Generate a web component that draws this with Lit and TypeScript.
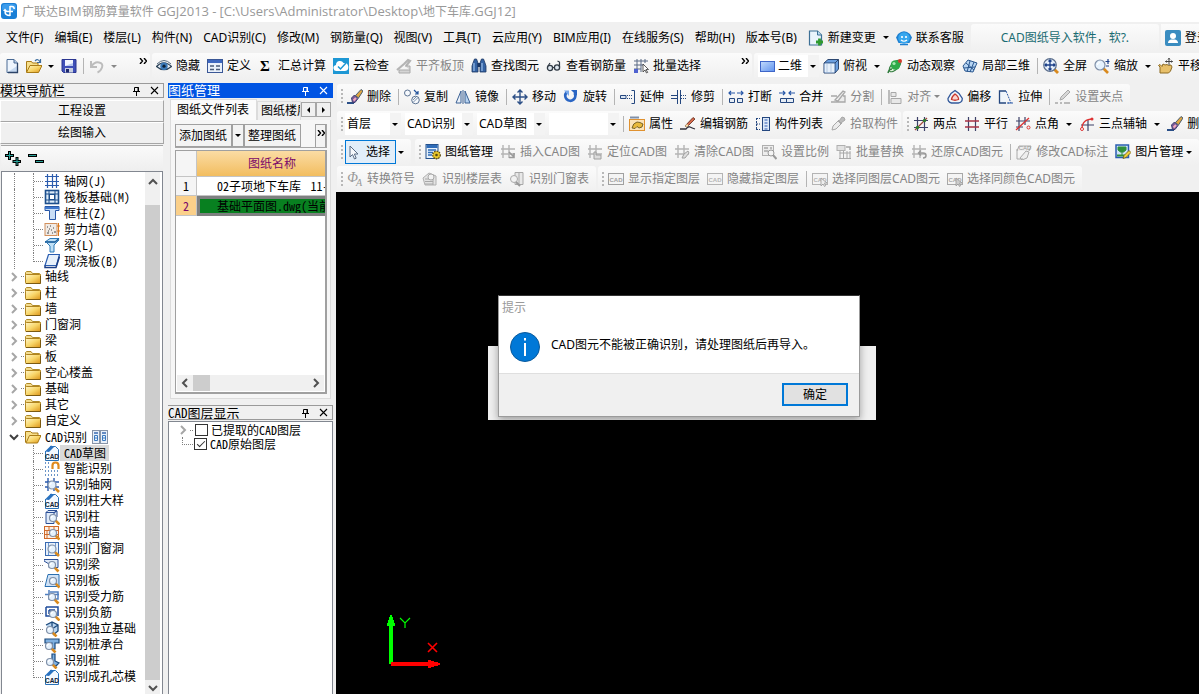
import { LitElement, html, svg, css, nothing } from "lit";
import { customElement, property, state } from "lit/decorators.js";

const G = "#a8a8a8";
const N = "#24477f";

const lens = (x: number, y: number, r = 4) => svg`
  <line x1="${x + r * 0.7}" y1="${y + r * 0.7}" x2="${x + r + 3}" y2="${y + r + 3}" stroke="#d98a1e" stroke-width="2.6"/>
  <circle cx="${x}" cy="${y}" r="${r}" fill="#e6f2fd" stroke="#8090a8" stroke-width="1.2"/>
  <path d="M${x - r * 0.5} ${y}a${r * 0.5} ${r * 0.5} 0 0 1 ${r * 0.5} ${-r * 0.5}" fill="none" stroke="#fff" stroke-width="1.2"/>`;

const hash = (c: string, o = 0) => svg`
  <path d="M${4 + o} 1v13M${10 + o} 1v13M1 5h14M1 10h14" fill="none" stroke="${c}" stroke-width="1.4"/>`;

const cadTag = (c: string) => svg`
  <rect x=".5" y="2.5" width="15" height="11" fill="#f4f4f4" stroke="${c}"/>
  <text x="8" y="10.500" font-size="6" font-weight="700" font-family="Liberation Sans, sans-serif" text-anchor="middle" fill="${c}">CAD</text>`;

const gold = svg`<linearGradient id="gold" x1="0" y1="0" x2="1" y2="1"><stop offset="0" stop-color="#fff6c8"/><stop offset=".5" stop-color="#f8d66a"/><stop offset="1" stop-color="#dc9418"/></linearGradient>`;

const ICONS: Record<string, unknown> = {
  app: svg`<rect width="16" height="16" rx="3" fill="#1a7fd6"/><rect x="1" y="1" width="14" height="7" rx="3" fill="#3b9cec"/>
    <path d="M9 3v10M3.500 8.500H12M9 3.500h2q2.200 0 2.200 2.500M4 8.500q0 4 5 4" fill="none" stroke="#fff" stroke-width="1.500"/><path d="M2 8l2-2.500L6 8z" fill="#fff"/>`,
  fresh: svg`<path d="M3 1.500h7l3.500 3.500v9.500H3z" fill="#eef5fd" stroke="#4a6a94"/><path d="M10 1.500V5h3.500" fill="#b6cbe6" stroke="#4a6a94"/><path d="M4 14h9V8z" fill="#c6d9f0"/><path d="M13.500 5v9.500H4" fill="none" stroke="#2c4468" stroke-width="1.300"/>`,
  open: svg`${gold}<path d="M.5 14V3.500h5l1 1.500H12v3" fill="#f7df8b" stroke="#a97b16"/><path d="M.5 14.500L4 7.500h12l-3.500 7z" fill="url(#gold)" stroke="#a97b16"/><path d="M9 3q3-3 5 1M14.500 1v3.500H11" fill="none" stroke="#3c6d9e" stroke-width="1.200"/>`,
  save: svg`<path d="M1 1.500h14v13H2.500L1 13z" fill="#3f50b8" stroke="#2b3690"/><rect x="4" y="2" width="8" height="6" fill="#f2f6ff"/><path d="M4 8h8V5z" fill="#b8c8ee"/><rect x="4" y="10" width="8" height="4.500" fill="#c8cfe0"/><rect x="5" y="11" width="3" height="3.500" fill="#1e2870"/>`,
  undo: svg`<path d="M2 3v6h6M2.500 8.500q3-5 7.500-4t3 5-4.500 5" fill="none" stroke="#bdbdbd" stroke-width="2"/>`,
  eye: svg`<path d="M.5 8.500Q7.500 1 15.500 8.500 8 15 .5 8.500z" fill="#e8eef4" stroke="#2b4258" stroke-width="1.200"/><circle cx="8" cy="8.200" r="3.700" fill="#3a79b8"/><circle cx="8" cy="8.200" r="1.600" fill="#0d2036"/><path d="M1 6Q8-1 15 6" fill="none" stroke="#54687c"/>`,
  define: svg`<rect x=".5" y="1.500" width="15" height="13" fill="#e9f0fb" stroke="#3a5796"/><rect x="1" y="2" width="14" height="3" fill="#3d67c0"/><path d="M3 8h4M3 11.500h4M9 8h4M9 11.500h4" stroke="#4a5b7a" stroke-width="1.500"/>`,
  sigma: svg`<text x="7" y="13" font-size="15" font-weight="700" font-family="Liberation Serif, serif" text-anchor="middle" fill="#000">Σ</text>`,
  cloud: svg`<rect width="16" height="16" fill="#1d97d4"/><path d="M4 13a3 3 0 0 1-1-6 4 4 0 0 1 7.500-2A4 4 0 0 1 12 13z" fill="#fff"/><path d="M5 8.500l2.500 2.500L13 5" fill="none" stroke="#1d97d4" stroke-width="1.500"/>`,
  level: svg`<path d="M1 12l7-6M8 6l4-4 2 1-4 5" fill="none" stroke="#b4b4b4" stroke-width="2.200"/><path d="M3 12h11v3H3zM9 8h5v4" fill="#d4d4d4" stroke="#aaa"/>`,
  binoc: svg`<path d="M2 5l1.500-4h2L7 5v9H1V8zM14 5l-1.500-4h-2L9 5v9h6V8z" fill="#3563a4" stroke="#1d3763" stroke-width=".8"/><rect x="6.500" y="5" width="3" height="4" fill="#1d3763"/><path d="M3 5v8M11 5v8" stroke="#9cc0ec" stroke-width="1.200"/>`,
  glasses: svg`<circle cx="4" cy="10" r="2.600" fill="#dfe8f0" stroke="#303a44" stroke-width="1.300"/><circle cx="11" cy="9.500" r="2.600" fill="#dfe8f0" stroke="#303a44" stroke-width="1.300"/><path d="M6.500 9.500h2M13.500 9V4l-2-1M2 8l2-3" fill="none" stroke="#303a44" stroke-width="1.200"/>`,
  batch: svg`<path d="M1 3h14M1 7h9M1 11h7M4 1v10M8 1v13M12 1v4" stroke="#5b6b85" fill="none"/><rect x="1" y="11" width="4" height="4" fill="#4f62d0"/><path d="M10 6v8l2-2 1.500 3 1.200-.6L13 11.500h2.500z" fill="#fff" stroke="#333" stroke-width=".8"/>`,
  plane: svg`<linearGradient id="sheet" x1="0" y1="0" x2="1" y2="1"><stop offset="0" stop-color="#c4dcfc"/><stop offset="1" stop-color="#5f92ee"/></linearGradient><rect x=".5" y="3.500" width="14" height="10" fill="url(#sheet)" stroke="#3f66c8"/>`,
  cube: svg`<path d="M1 5l4-3.500h10.500V11L12 15H1z" fill="#6b9fe0" stroke="#2c4770"/><path d="M1 5h11v10M12 5l3.500-3.500" fill="none" stroke="#2c4770"/><rect x="1.500" y="5.500" width="10" height="9" fill="#e7f0fa"/><path d="M4 6v8M8 6v8" stroke="#b5c9e2"/>`,
  orbit: svg`<ellipse cx="8" cy="8" rx="7.500" ry="3.500" transform="rotate(-45 8 8)" fill="#dff3da" stroke="#2f7a3c"/><circle cx="8.500" cy="7" r="4.800" fill="#2faa48"/><circle cx="7" cy="5.500" r="1.600" fill="#a6eab0"/><circle cx="13" cy="3" r="2" fill="#d43a2c"/><path d="M1 15q1-4 4-4" stroke="#2f7a3c" fill="none" stroke-width="1.500"/>`,
  local3d: svg`<path d="M1 8l5-6 9 3-4 9-8-1z" fill="#b8d6f4" stroke="#2a578f"/><path d="M4 5l8 7M8 3L5 14M12 4L8 14M2 10l11-1" fill="none" stroke="#2a578f"/>`,
  full: svg`<line x1="11" y1="11" x2="15" y2="15" stroke="#d98a1e" stroke-width="2.800"/><circle cx="7" cy="7" r="6.300" fill="#e4eefa" stroke="#5c6f8c" stroke-width="1.200"/><path d="M7 2v10M2 7h10M5.500 3.500L7 2l1.500 1.500M5.500 10.500L7 12l1.500-1.500M3.500 5.500L2 7l1.500 1.500M10.500 5.500L12 7l-1.500 1.500" fill="none" stroke="#1b3f88" stroke-width="1.300"/>`,
  zoom: svg`${lens(6, 7, 5)}<path d="M14 1v5M11.500 3.500h4M12 8h3" stroke="#1b3f88" stroke-width="1.200"/>`,
  pan: svg`<path d="M2 15V9L.5 7.500 2 6.500l2 2 1-2.500 2 1 2-.5 1.500 1L13 7l1 2-1.500 4-2 2z" fill="#e8c06a" stroke="#8d6a22"/><path d="M11 0v7M7.500 3.500h7M10 1.500L11 .3l1 1.200M8.500 2.500l-1 1 1 1M13.500 2.500l1 1-1 1" fill="none" stroke="#444"/>`,
  brush: svg`<path d="M0 14h7" stroke="#2a4f88" stroke-width="2"/><path d="M5.500 13.500L4.500 9l3-3 3.500 3.500-3 4z" fill="#7a5a96" stroke="#3d3f70"/><path d="M6.500 11.500l2.500-2.500" stroke="#f2a8bc" stroke-width="2.200"/><path d="M8.500 6.500L14 .5l2 1.500-4.500 7z" fill="#e0a640" stroke="#39506a" stroke-width=".9"/>`,
  copy: svg`<circle cx="3.500" cy="4" r="3" fill="#f6f9fd" stroke="#5c7392"/><circle cx="11.500" cy="11" r="3.800" fill="#f6f9fd" stroke="#5c7392"/><path d="M9 13.500l5-5M9 11l3-3" stroke="#5c7392" stroke-width=".8"/><path d="M10 1l4 4M14 2v3h-3" fill="none" stroke="#24549c" stroke-width="1.200"/>`,
  mirror: svg`<path d="M6 2v12H1z" fill="#eaf1f9" stroke="#3a6094"/><path d="M10 2v12h5z" fill="#b6d2ef" stroke="#3a6094"/><path d="M8 1v14" stroke="#3a6094"/>`,
  move: svg`<path d="M8 1v14M1 8h14M5.500 3.500L8 1l2.500 2.500M5.500 12.500L8 15l2.500-2.500M3.500 5.500L1 8l2.500 2.500M12.500 5.500L15 8l-2.500 2.500" fill="none" stroke="#2c4f86" stroke-width="1.400"/>`,
  rotate: svg`<path d="M3.500 3.500a5 5 0 1 0 8 .5" fill="none" stroke="#2b66c4" stroke-width="2.800"/><path d="M8 1h6v6z" fill="#2b66c4"/><path d="M1 1.500h5V7z" fill="#7aa9ea"/>`,
  extend: svg`<path d="M.5 6.500h5.500v3H.5z" fill="#dbe6f3" stroke="${N}"/><path d="M7 6.500h5M7 9.500h5" stroke="${N}" stroke-dasharray="1 1"/><path d="M11.500 1.500h3v13h-3" fill="none" stroke="${N}"/>`,
  trim: svg`<path d="M0 6.500h6M0 9.500h6" stroke="${N}"/><path d="M6.500 1v14M9.500 1v14" stroke="${N}"/><path d="M10 6.500h6M10 9.500h6" stroke="${N}" stroke-dasharray="1 1"/>`,
  brk: svg`<path d="M1 4h6M9 4h6M3 2L1 4l2 2M13 2l2 2-2 2" fill="none" stroke="#2858a8" stroke-width="1.200"/><path d="M1.500 9.500h5v4h-5zM9.500 9.500h5v4h-5z" fill="#e6edf5" stroke="${N}"/>`,
  join: svg`<path d="M0 4h6M10 4h6M4 2l2 2-2 2M12 2l-2 2 2 2" fill="none" stroke="#2858a8" stroke-width="1.200"/><path d="M1.500 9.500h6v4h-6zM7.500 9.500h7v4h-7z" fill="#e6edf5" stroke="${N}"/>`,
  split: svg`<path d="M1 7h6M1 13h14V7h-2M5 11l8-9 2 1-7 9z" fill="#ececec" stroke="${G}" stroke-width="1.300"/>`,
  align: svg`<path d="M2 1v14" stroke="${G}" stroke-width="1.500"/><path d="M4 3.500h5v4H4zM4 9.500h10v5H4z" fill="#e8e8e8" stroke="${G}"/>`,
  offset: svg`<path d="M8 1.500l4 3 3.300 5q0 4-4 4.500H4.500Q.7 13 1 9.500l3-5z" fill="#f3f6fa" stroke="#33599a" stroke-width="1.300"/><path d="M8 5q4 3 3.500 5.500-3.500 1.500-7 0Q4.500 8 8 5z" fill="#fbd6d0" stroke="#c9382c" stroke-width="1.300"/>`,
  stretch: svg`<path d="M8 2H1.500v12H8" fill="#eff5fb" stroke="${N}" stroke-width="1.300"/><path d="M8 2l5 12H8M10 14h5" fill="none" stroke="#2858a8" stroke-dasharray="2 1"/>`,
  grip: svg`<path d="M0 14h3M5 14h2M9 14h6" stroke="${G}" stroke-width="1.500"/><path d="M5 11l1-3 7-7 2 2-7 7z" fill="#d7d7d7" stroke="${G}"/>`,
  prop: svg`<path d="M1 1.500h9" stroke="#8090a8" stroke-width="2"/><rect x=".5" y="3.500" width="15" height="11" fill="#fbe3b8" stroke="#e0912f"/><path d="M3 12q1-5 5-6 3 0 6 2l-1 3-3 1-2-1.500-2 2z" fill="#e8b93a" stroke="#5b4a16" stroke-width=".8"/>`,
  edit: svg`<path d="M0 13h6q2-3 4-2t5 2" fill="none" stroke="#30303a" stroke-width="1.300"/><path d="M5 10l8-8.500 2 1.500-8 8z" fill="#d8694a" stroke="#5b2a1a" stroke-width=".8"/><path d="M5 10l2-2 1.500 1.500L7 11z" fill="#f4e4b0"/>`,
  list: svg`<path d="M1.500 2v12M1 2.500h4M1 8h4M1 13.500h4" fill="none" stroke="${N}" stroke-dasharray="2 1"/><rect x="7.500" y="1.500" width="7" height="13" fill="#dce8f7" stroke="${N}"/><path d="M9.500 4h3M9.500 7h3M9.500 10h3M9.500 13h3" stroke="#2c58b0"/>`,
  picker: svg`<path d="M2 14l1-4 5-5 3 3-5 5z" fill="#ececec" stroke="${G}"/><path d="M8 4l4 4M9 5l3-4q3 0 3 3l-4 3z" fill="#bcbcbc" stroke="${G}"/>`,
  two: svg`<path d="M4.500 1v14M11.500 1v14M1 4.500h14M1 11.500h14" stroke="#3d4168" stroke-width="1.200"/><path d="M2 14L14 2" stroke="#a04a3c" stroke-width="1.200"/><circle cx="4.500" cy="11.500" r="1.700" fill="#2f7d2f"/><circle cx="11.500" cy="4.500" r="1.700" fill="#2f7d2f"/>`,
  para: svg`<path d="M4.500 1v14M11.500 1v14" stroke="#3d4168" stroke-width="1.200"/><path d="M1 5h14M1 11h14" stroke="#a83244" stroke-width="1.300"/>`,
  angle: svg`<path d="M4 1v14M10 1v8M1 5h14M1 11h7" stroke="#3d4168" stroke-width="1.200"/><path d="M1 14L14 2" stroke="#d33" stroke-width="1.300"/><circle cx="13.500" cy="11.500" r="1.500" fill="none" stroke="#d33"/>`,
  three: svg`<path d="M9 4v11M2 9h13" stroke="#3d4168" stroke-width="1.200"/><path d="M3 13Q3 3 14 3" fill="none" stroke="#d33" stroke-width="1.300"/><circle cx="3" cy="13" r="1.500" fill="#fff" stroke="#d33"/><circle cx="13" cy="3" r="1.500" fill="#d33"/>`,
  cursor: svg`<path d="M4 2v11l2.500-2.500L8.500 15l1.700-.8L8.400 10H12z" fill="#f7f9fc" stroke="#5a6c84"/>`,
  mgr: svg`<rect x="1" y=".5" width="12" height="14" fill="#e6f0fb" stroke="#23508c"/><rect x="1.500" y="1" width="11" height="3" fill="#2f6cb8"/><path d="M3 6h8M3 8.500h5M3 11h4" stroke="#2f6cb8" stroke-width="1.500"/><circle cx="11.500" cy="11" r="3.800" fill="#e8c628" stroke="#5a4a10" stroke-width="1.300" stroke-dasharray="1.500 1"/><circle cx="11.500" cy="11" r="1.300" fill="#5a4a10"/>`,
  insert: svg`${hash("#b4b4b4", -1)}<path d="M9 8l5 5M14 9v4.500H9" fill="none" stroke="#9a9a9a" stroke-width="1.600"/>`,
  locate: svg`${hash("#b4b4b4", -1)}<path d="M7 15V8h2v3h5v4z" fill="#ddd" stroke="#a0a0a0"/>`,
  clear: svg`${hash("#b4b4b4", 0)}<path d="M8 14l2-4 4-3 1 2-4 5z" fill="#ddd" stroke="#a0a0a0"/>`,
  scale: svg`<rect x="1.500" y="1.500" width="11" height="10" fill="#ededed" stroke="#b0b0b0"/><path d="M3 4h4M3 7h4M9 4h2" stroke="#a8a8a8" stroke-width="1.500"/><circle cx="10" cy="9" r="3" fill="#f4f4f4" stroke="#999"/><path d="M12 11l3.500 4" stroke="#999" stroke-width="2"/>`,
  replace: svg`<rect x="1" y="1.500" width="8" height="5" fill="#e2e2e2" stroke="#b0b0b0"/><path d="M10 3h4v3" fill="none" stroke="#a8a8a8" stroke-width="1.500"/><path d="M3.500 9h11M4 7v8M7.500 7v8M11 7v8M14 7v8M3 14.500h12" stroke="#a8a8a8"/>`,
  restore: svg`${hash("#b4b4b4", -1)}<path d="M8 9h4q3 0 3 2.500T12 14M10 6.500L7.500 9l2.500 2.500" fill="none" stroke="#9a9a9a" stroke-width="1.500"/>`,
  modify: svg`<path d="M1 7l2-5h12l-2 5M1 5v10M1 15h6M4 14l6-7 3 1-2 6-5 2z" fill="#eee" stroke="#aaa"/><text x="9" y="6" font-size="6" font-family="Liberation Sans, sans-serif" text-anchor="middle" fill="#999">CAD</text>`,
  pics: svg`<rect x="1" y="1" width="12.500" height="12.500" fill="#cfe3f8" stroke="#2a5db0" stroke-width="1.500"/><path d="M3 3h8v3L8.500 8h-3L3 6zM7 7v5" fill="#2f8f3a" stroke="#2f8f3a"/><path d="M2 11.500h10" stroke="#2f8f3a" stroke-width="2"/><path d="M8 14.500l1-3 5-5 2 2-5 5z" fill="#f2d03c" stroke="#6a5a10" stroke-width=".8"/>`,
  convert: svg`<text x="5.500" y="11" font-size="14" font-style="italic" font-family="Liberation Serif, serif" text-anchor="middle" fill="#999">Φ</text><text x="12" y="15" font-size="10" font-style="italic" font-family="Liberation Serif, serif" text-anchor="middle" fill="#999">A</text>`,
  floors: svg`<path d="M1 7l6-5 7 3v9H3z" fill="#e3e3e3" stroke="#b0b0b0"/><path d="M3 8h8M3 10.500h8M3 13h8M11 5v9" stroke="#a8a8a8"/><circle cx="9" cy="6" r="3" fill="#f2f2f2" stroke="#aaa"/>`,
  doors: svg`<path d="M6 1.500h8v12H6zM10 2v12" fill="#e8e8e8" stroke="#a8a8a8"/><circle cx="5" cy="8" r="3.500" fill="#f2f2f2" stroke="#aaa"/><path d="M7 11l4 4" stroke="#999" stroke-width="2"/>`,
  cadShow: cadTag("#a0a0a0"),
  cadHide: cadTag("#b4b4b4"),
  cadPick: svg`${cadTag("#b4b4b4")}<path d="M9 7v8l2-2 1.500 2.500 1-.6L12.500 12H15z" fill="#eee" stroke="#999" stroke-width=".8"/>`,
  cadColor: svg`${cadTag("#a8a8a8")}<path d="M9 7v8l2-2 1.500 2.500 1-.6L12.500 12H15z" fill="#ccc" stroke="#999" stroke-width=".8"/>`,
  change: svg`<path d="M1.500 1h8l4 4v10h-12z" fill="#eaf4fc" stroke="#3d7096" stroke-width="1.200"/><path d="M9.500 1v4h4" fill="#bcdcf2" stroke="#3d7096"/><path d="M11.500 8.500v7M8 12h7" stroke="#2f9a2f" stroke-width="2.800"/>`,
  service: svg`<path d="M2 4Q8-1.500 14 4l2 3.500L13.500 13h-11L0 7.500z" fill="#1d7fd0"/><circle cx="8" cy="8" r="5.800" fill="#36a6ee"/><circle cx="6" cy="7" r="1.100" fill="#fff"/><circle cx="10" cy="7" r="1.100" fill="#fff"/><path d="M5 10q3 2.500 6 0" fill="none" stroke="#fff" stroke-width="1.200"/><path d="M4 14.500h8" stroke="#1d7fd0" stroke-width="1.500"/>`,
  user: svg`<rect width="16" height="16" rx="2" fill="#3a8cc0"/><circle cx="8" cy="6" r="3" fill="#fff"/><path d="M3 13q0-3 3-3.500h4q3 .5 3 3.500z" fill="#fff"/>`,
  folder: svg`${gold}<path d="M.5 12V3.500l1-1h4.500l1.500 2h7l1 1V12" fill="#f3dc90" stroke="#b08a28"/><rect x=".5" y="5.500" width="15" height="9" rx=".8" fill="url(#gold)" stroke="#b08420"/><path d="M1 14.500h14.500V7" fill="none" stroke="#7c5a10"/>`,
  folderOpen: svg`${gold}<path d="M.5 13.500v-11h5L7 4h6v3" fill="#f7df8b" stroke="#a97b16"/><path d="M1 14L4.500 6.500H16L12.500 14z" fill="url(#gold)" stroke="#a97b16"/>`,
  book: svg`<rect x=".5" y="1.500" width="7" height="13" fill="#e8f0fa" stroke="#8794a8"/><rect x="8.500" y="1.500" width="7" height="13" fill="#e8f0fa" stroke="#8794a8"/><path d="M2 4h4M10 4h4" stroke="#3a6ab0" stroke-width="1.500"/><path d="M2.500 6.500h3v5h-3zM10.500 6.500h3v5h-3zM2.500 9h3M10.500 9h3" fill="none" stroke="#3a7ac0"/>`,
  axis: svg`<path d="M3.500 1v14M8.500 1v14M12.500 1v14M1 3.500h14M1 8.500h14M1 12.500h14" stroke="#2c5cae" stroke-width="1.200" fill="none"/>`,
  raft: svg`<rect x="1.500" y="1.500" width="13" height="13" fill="#dcebf8" stroke="#1d4f8c" stroke-width="1.600"/><path d="M5 2v12M11 2v12M2 5h12M2 11h12" stroke="#1d4f8c"/><rect x="5.500" y="5.500" width="5" height="5" fill="#fff" stroke="#1d4f8c"/>`,
  column: svg`<path d="M1 1.500h14v4h-3.500v9h-6v-9H1z" fill="#c9def6" stroke="#2757a6"/><path d="M1 2h14v2H1z" fill="#3f78cd"/>`,
  wall: svg`<rect x="1" y="2.500" width="12" height="12" fill="#f0ebe6" stroke="#d2905c"/><path d="M3 6h1M6 5h1M9 7h1M4 10h1M7 9h1M3 12h2M8 12h1M10 11h2M5 8h1" stroke="#444"/><path d="M14.500 2v13M13 5h3M13 10h3" stroke="#d9791e"/>`,
  beam: svg`<path d="M1 5l5-3.500h9L11 5zM3 6l3 3v6h4V8l5-5" fill="#bfe0f6" stroke="#2d7bb8"/><path d="M1 5h10l4-3.500" fill="none" stroke="#1d5f9c" stroke-width="1.300"/>`,
  slab: svg`<path d="M4.500 1.500h11l-3 11H1z" fill="#e8f1fb" stroke="#2a5db0" stroke-width="1.200"/><path d="M1 12.500v2h11l3.500-11" fill="none" stroke="#1c3f86" stroke-width="1.500"/>`,
  cad: svg`<path d="M6 1.500h5.500l3 3V15.500H1.500V6" fill="#f4f9ff" stroke="#2a72b8"/><path d="M1 6.500l6-6 3 1.500-5 5z" fill="#2a72c0"/><text x="8" y="13.500" font-size="6.500" font-weight="700" font-family="Liberation Sans, sans-serif" text-anchor="middle" fill="#123">CAD</text>`,
  smart: svg`<path d="M1 2h6M1 6h6M1 10h14M1 14h14" stroke="#3c74b8" stroke-width="1.300" stroke-dasharray="1 2"/><path d="M8.500 8V4.500a3 3 0 0 1 6 0V8" fill="none" stroke="#e08a1e" stroke-width="2.200"/>`,
  rAxis: svg`${hash("#2c5cae")}${lens(8, 8)}`,
  rCol: svg`<path d="M2 3.500h8v11H2zM2 3.500l2-2h9l-3 2M10 4l3-2v6" fill="#dfeaf8" stroke="#2b4f96"/>${lens(9, 9, 3.5)}`,
  rWall: svg`<rect x=".5" y="1.500" width="14" height="12" fill="#fdf0e4" stroke="#cf6a2a"/><path d="M1 5.500h13M1 9.500h13M5 2v3M10 2v3M3 6v3M3 10v4" stroke="#cf6a2a"/>${lens(9, 8, 3.5)}`,
  rDoor: svg`<rect x="1.500" y="1.500" width="13" height="13" fill="#e7f0fb" stroke="#3a6ab0"/><path d="M4.500 2v12M11.500 2v12" stroke="#6f9ad2"/>${lens(8, 8)}`,
  rBeam: svg`<path d="M0 2.500h14v8H5V7L0 4z" fill="#dfeaf8" stroke="#2b4f96"/>${lens(8, 8, 3.5)}`,
  rSlab: svg`<path d="M4 1.500h11v12H1z" fill="#cfe2f6" stroke="#2a6fb0"/>${lens(9, 8, 3.5)}`,
  rBar: svg`<path d="M1 5.500h14M5 1v9h9V3H6" fill="none" stroke="#4f7fc0" stroke-width="1.500"/>${lens(8, 8, 3.5)}`,
  rNeg: svg`<path d="M2 2h12v9M2 2v9h6M5 5v4M5 5h6" fill="none" stroke="#1f4c9c" stroke-width="1.500"/>${lens(9, 9, 3.5)}`,
  rFound: svg`<path d="M2 4l6-3 6 3v6l-5 4M8 1v6M14 4L8 8" fill="#b8d4ee" stroke="#1c4a7c" stroke-width="1.300"/>${lens(6, 9, 3.5)}`,
  rCap: svg`<path d="M1 2h14v4h-4v6H8V6H1z" fill="#7fb0e0" stroke="#1c4a7c" stroke-width="1.200"/>${lens(5, 9, 3.5)}`,
  rPile: svg`<path d="M8 1h3v7l4 2-3 3-6-2 2-3z" fill="#7fb0e0" stroke="#1c4a7c" stroke-width="1.200"/>${lens(6, 9, 3.5)}`,
};

const icon = (name: string) =>
  html`<svg class="ic" viewBox="0 0 16 16" width="16" height="16" aria-hidden="true">${ICONS[name]}</svg>`;
const caret = (dim = false) =>
  html`<svg class="caret" viewBox="0 0 6 3" width="6" height="3" aria-hidden="true"><path d="M0 0h6L3 3z" fill="${dim ? "#888" : "#000"}"/></svg>`;
const more = html`<svg class="more" viewBox="0 0 8 6" width="8" height="6" aria-hidden="true"><path d="M1 0l2.500 3L1 6M5 0l2.500 3L5 6" fill="none" stroke="#000" stroke-width="1.400"/></svg>`;
const chevron = (d: string, color = "#505050") =>
  html`<svg viewBox="0 0 10 10" width="10" height="10" aria-hidden="true"><path d="${d}" fill="none" stroke="${color}" stroke-width="2"/></svg>`;
const UP = "M1 7l4-4 4 4", DOWN = "M1 3l4 4 4-4", LEFT = "M7 1L3 5l4 4", RIGHT = "M3 1l4 4-4 4";

/* Wraps the Latin runs of a label, so that they can take a face of their own. */
const mono = (text: string) =>
  text.split(/([\x21-\x7e]+)/).map((p) => (/^[\x21-\x7e]/.test(p) ? html`<span class="lat">${p}</span>` : p));

const iconStyles = css`
  .ic { flex: none; display: block; }
  .caret { flex: none; display: block; }
  .more { flex: none; display: block; }
  button {
    font: inherit; color: inherit; border: 0; padding: 0; margin: 0;
    background: none; white-space: nowrap; text-align: left;
  }
  .lat { font-family: "Noto Sans Mono CJK SC", "Liberation Mono", monospace; }
`;

type Width = "s" | "m" | "l";
type Item =
  | { k: "b"; i?: string; t?: string; off?: boolean; drop?: boolean; tight?: boolean }
  | { k: "sep" } | { k: "more" } | { k: "grip"; near?: boolean } | { k: "sel" }
  | { k: "combo"; t: string; label: string; w: Width; i?: string };

const b = (i: string, t = "", o: { off?: boolean; drop?: boolean; tight?: boolean } = {}): Item => ({ k: "b", i, t, ...o });
const off = { off: true };
const sep: Item = { k: "sep" }, grip: Item = { k: "grip" }, near: Item = { k: "grip", near: true }, moreItem: Item = { k: "more" };

@customElement("tool-strip")
class ToolStrip extends LitElement {
  @property({ attribute: false }) items: Item[] = [];

  static styles = [iconStyles, css`
    :host {
      display: flex; align-items: center; flex: none; height: 26px; padding: 0 0 0 4px;
      border-radius: 3px; background: linear-gradient(#fbfbfb, #f0f0f0);
    }
    .btn { display: flex; align-items: center; gap: 4px; margin-right: 7px; height: 22px; flex: none; }
    .btn:disabled { color: #858585; }
    .bare { margin-right: 6px; }
    .tight { margin-right: 3px; }
    .caret { margin-right: 7px; }
    .sep { width: 1px; height: 16px; background: #b4b4b4; margin-right: 5px; flex: none; }
    .grip {
      width: 2px; height: 15px; margin-right: 4px; flex: none;
      background: repeating-linear-gradient(#b8b8b8 0 2px, transparent 2px 4px);
    }
    .near { margin-right: 2px; }
    .more { align-self: flex-start; margin: 5px 3px 0 auto; }
    .sel {
      display: flex; align-items: center; height: 24px; padding: 0 5px 0 0; gap: 4px;
      border: 1px solid #0078d7; background: #e2eef9; margin-right: 2px; box-sizing: border-box;
    }
    .combo { display: grid; align-items: center; margin-right: 4px; height: 22px; background: #fff; flex: none; }
    .combo > * { grid-area: 1 / 1; }
    .combo .caret { justify-self: end; margin-right: 3px; pointer-events: none; }
    .combo .ic { margin-left: 2px; pointer-events: none; }
    select {
      appearance: none; font: inherit; color: #000; border: 0; border-radius: 0; height: 22px; padding: 0 12px 0 2px;
      outline: 0; background: linear-gradient(to left, #f3f3f3 11px, #fff 11px);
    }
    .s { width: 56px; }
    .m { width: 68px; }
    .l { width: 70px; }
    .pic { padding-left: 20px; width: 61px; }
  `];

  private one(it: Item) {
    switch (it.k) {
      case "sep": return html`<span class="sep"></span>`;
      case "grip": return html`<span class="grip ${it.near ? "near" : ""}"></span>`;
      case "more": return more;
      case "sel": return html`<button class="sel">${icon("cursor")}<span>选择</span></button>${caret()}`;
      case "combo": return html`<label class="combo">
        <select class=${it.i ? "pic" : it.w} aria-label=${it.label}><option>${it.t}</option></select>
        ${it.i ? icon(it.i) : nothing}${caret()}</label>`;
      case "b": return html`<button class="btn ${it.t ? "" : "bare"} ${it.tight ? "tight" : ""}" ?disabled=${!!it.off}>
        ${it.i ? icon(it.i) : nothing}${it.t ? html`<span>${it.t}</span>` : nothing}</button>${it.drop ? caret(!!it.off) : nothing}`;
    }
  }
  render() { return this.items.map((i) => this.one(i)); }
}

const ROW_FILE: Item[] = [b("fresh"), b("open", "", { drop: true }), b("save"), sep, b("undo", "", { off: true, drop: true }), moreItem];
const ROW_MAIN: Item[] = [
  b("eye", "隐藏"), b("define", "定义"), b("sigma", "汇总计算"), b("cloud", "云检查"), b("level", "平齐板顶", off),
  b("binoc", "查找图元"), b("glasses", "查看钢筋量"), b("batch", "批量选择"), moreItem,
];
const ROW_VIEW: Item[] = [
  { k: "combo", t: "二维", label: "视图维度", w: "m", i: "plane" }, b("cube", "俯视", { drop: true }), b("orbit", "动态观察"),
  b("local3d", "局部三维"), sep, b("full", "全屏"), b("zoom", "缩放", { drop: true }), b("pan", "平移"),
];
const ROW_EDIT: Item[] = [
  grip, b("brush", "删除"), sep, b("copy", "复制"), b("mirror", "镜像"), sep, b("move", "移动"), b("rotate", "旋转"), sep,
  b("extend", "延伸"), b("trim", "修剪"), sep, b("brk", "打断"), b("join", "合并"), b("split", "分割", off), sep,
  b("align", "对齐", { off: true, drop: true, tight: true }), b("offset", "偏移"), b("stretch", "拉伸"), sep, b("grip", "设置夹点", off),
];
const ROW_PART: Item[] = [
  near, { k: "combo", t: "首层", label: "楼层", w: "s" }, { k: "combo", t: "CAD识别", label: "构件类型", w: "m" },
  { k: "combo", t: "CAD草图", label: "构件", w: "m" }, { k: "combo", t: "", label: "名称", w: "l" }, sep,
  b("prop", "属性"), b("edit", "编辑钢筋"), b("list", "构件列表"), b("picker", "拾取构件", { off: true, tight: true }),
];
const ROW_AXIS: Item[] = [
  grip, b("two", "两点"), b("para", "平行"), b("angle", "点角", { drop: true }), b("three", "三点辅轴", { drop: true }), b("brush", "删除"),
];
const ROW_SELECT: Item[] = [near, { k: "sel" }];
const ROW_CAD: Item[] = [
  grip, b("mgr", "图纸管理"), b("insert", "插入CAD图", off), b("locate", "定位CAD图", off), b("clear", "清除CAD图", off),
  b("scale", "设置比例", off), b("replace", "批量替换", off), b("restore", "还原CAD图元", off), sep,
  b("modify", "修改CAD标注", off), b("pics", "图片管理", { drop: true, tight: true }),
];
const ROW_SYMBOL: Item[] = [grip, b("convert", "转换符号", off), b("floors", "识别楼层表", off), b("doors", "识别门窗表", off)];
const ROW_LAYER: Item[] = [
  grip, b("cadShow", "显示指定图层", off), b("cadHide", "隐藏指定图层", off), sep,
  b("cadPick", "选择同图层CAD图元", off), b("cadColor", "选择同颜色CAD图元", off),
];

const MENUS = ["文件(F)", "编辑(E)", "楼层(L)", "构件(N)", "CAD识别(C)", "修改(M)", "钢筋量(Q)", "视图(V)", "工具(T)",
  "云应用(Y)", "BIM应用(I)", "在线服务(S)", "帮助(H)", "版本号(B)"];

@customElement("panel-title")
class PanelTitle extends LitElement {
  @property() label = "";
  @property({ type: Boolean, reflect: true }) active = false;
  static styles = [iconStyles, css`
    :host {
      display: flex; align-items: center; height: 15px; box-sizing: border-box; overflow: hidden;
      border: 1px solid #9a9a9a; border-left: 0; color: #000; background: #f0f0f0; flex: none;
      font-size: 13px; line-height: 13px; padding-right: 4px;
    }
    :host([active]) { background: #0054e3; border-color: #0054e3; color: #fff; }
    .name { flex: 1; white-space: nowrap; }
    button { height: 11px; width: 9px; margin-left: 9px; }
    svg { display: block; }
  `];
  render() {
    return html`<span class="name">${mono(this.label)}</span>
      <button aria-label="固定"><svg viewBox="0 0 9 11" width="9" height="11"><path d="M2.500 6V2.500h4V6M1 6.500h7M4.500 7v4M6 2v4" fill="none" stroke="currentColor"/></svg></button>
      <button aria-label="关闭"><svg viewBox="0 0 9 11" width="9" height="11"><path d="M1 2l7 7M8 2L1 9" fill="none" stroke="currentColor" stroke-width="1.100"/></svg></button>`;
  }
}

const LEAVES_TOP: [string, string][] = [["axis", "轴网(J)"], ["raft", "筏板基础(M)"], ["column", "框柱(Z)"], ["wall", "剪力墙(Q)"], ["beam", "梁(L)"], ["slab", "现浇板(B)"]];
const GROUPS = ["轴线", "柱", "墙", "门窗洞", "梁", "板", "空心楼盖", "基础", "其它", "自定义"];
const LEAVES_CAD: [string, string][] = [["cad", "CAD草图"], ["smart", "智能识别"], ["rAxis", "识别轴网"], ["cad", "识别柱大样"], ["rCol", "识别柱"],
  ["rWall", "识别墙"], ["rDoor", "识别门窗洞"], ["rBeam", "识别梁"], ["rSlab", "识别板"], ["rBar", "识别受力筋"], ["rNeg", "识别负筋"],
  ["rFound", "识别独立基础"], ["rCap", "识别桩承台"], ["rPile", "识别桩"], ["cad", "识别成孔芯模"]];

@customElement("module-nav")
class ModuleNav extends LitElement {
  @state() private picked = "CAD草图";
  static styles = [iconStyles, css`
    :host { display: flex; flex-direction: column; width: 164px; flex: none; min-height: 0; background: #f0f0f0; }
    .wide {
      height: 22px; text-align: center; border: 1px solid #a6a6a6; border-left-color: #fff; border-top-color: #fff; flex: none;
    }
    .first { margin-top: 2px; }
    .tools {
      display: flex; align-items: center; gap: 7px; height: 26px; flex: none; margin: 1px 1px 0 1px; padding-left: 4px;
      border-top: 1px solid #a6a6a6; background: linear-gradient(#fafafa, #eee);
      box-sizing: border-box;
    }
    .tree { display: flex; flex: 1; min-height: 0; margin: 0 1px; border: 1px solid #828790; border-bottom: 0; background: #fff; overflow: hidden; }
    .rows { flex: 1; min-width: 0; padding-top: 1px; list-style: none; margin: 0; padding-left: 0; }
    .row { display: flex; align-items: center; height: 16px; line-height: 16px; white-space: nowrap; }
    .root { width: 19px; margin-left: 12px; height: 16px; flex: none; box-sizing: border-box; }
    .on { border-left: 1px dotted #808080; }
    .link {
      width: 11px; height: 16px; flex: none; box-sizing: border-box; border-left: 1px dotted #808080;
      background: repeating-linear-gradient(to right, #808080 0 1px, transparent 1px 2px) 0 8px / 100% 1px no-repeat;
    }
    .last { height: 9px; align-self: flex-start; }
    .leaf { padding: 0 3px 0 4px; height: 16px; }
    .picked { background: #d9d9d9; }
    .twist { margin-left: 7px; width: 10px; height: 10px; display: block; flex: none; }
    .twist svg { display: block; }
    .stub { width: 3px; height: 1px; margin: 0 1px 0 2px; border-top: 1px dotted #808080; flex: none; }
    .name { padding: 0 5px 0 4px; height: 16px; }
    .bar { display: flex; flex-direction: column; width: 15px; margin-right: 2px; background: #f0f0f0; flex: none; align-items: center; }
    .top { height: 33px; padding-top: 5px; box-sizing: border-box; }
    .thumb { flex: 1; align-self: stretch; background: #cdcdcd; }
    .bottom { height: 14px; padding-top: 3px; box-sizing: border-box; }
    .bar svg { display: block; }
  `];

  private leaf([ic, name]: [string, string], root: boolean, last: boolean) {
    return html`<li class="row"><span class="root ${root ? "on" : ""}"></span><span class="link ${last ? "last" : ""}"></span>${icon(ic)}
      <button class="leaf ${this.picked === name ? "picked" : ""}" @click=${() => (this.picked = name)}>${mono(name)}</button></li>`;
  }
  render() {
    return html`
      <panel-title label="模块导航栏"></panel-title>
      <button class="wide first">工程设置</button>
      <button class="wide">绘图输入</button>
      <div class="tools">
        <button aria-label="全部展开"><svg class="ic" viewBox="0 0 16 16" width="16" height="16"><path d="M4.500 0v9M0 4.500h9M12 6v9M7.500 10.500h8.500" stroke="#000" stroke-width="3"/><path d="M4.500 1v7M1 4.500h7M12 7v7M8.500 10.500h6.500" stroke="#2aa39a"/></svg></button>
        <button aria-label="全部折叠"><svg class="ic" viewBox="0 0 16 16" width="16" height="16"><path d="M0 4.500h9M7 10.500h9" stroke="#000" stroke-width="3"/><path d="M1 4.500h7M8 10.500h7" stroke="#2aa39a"/></svg></button>
      </div>
      <div class="tree">
        <ul class="rows">
          ${LEAVES_TOP.map((l, i) => this.leaf(l, true, i === LEAVES_TOP.length - 1))}
          ${GROUPS.map((g) => html`<li class="row"><span class="twist">${chevron(RIGHT, "#a6a6a6")}</span><span class="stub"></span>${icon("folder")}<button class="name">${g}</button></li>`)}
          <li class="row"><span class="twist">${chevron(DOWN, "#404040")}</span><span class="stub"></span>${icon("folderOpen")}<button class="name">${mono("CAD识别")}</button>${icon("book")}</li>
          ${LEAVES_CAD.map((l, i) => this.leaf(l, false, i === LEAVES_CAD.length - 1))}
        </ul>
        <div class="bar"><span class="top">${chevron(UP)}</span><span class="thumb"></span><span class="bottom">${chevron(DOWN)}</span></div>
      </div>`;
  }
}

@customElement("drawing-panel")
class DrawingPanel extends LitElement {
  static styles = [iconStyles, css`
    :host { display: flex; flex-direction: column; width: 165px; flex: none; min-height: 0; background: #f0f0f0; }
    .tabs { display: flex; height: 21px; margin: 1px 2px 0 2px; flex: none; align-items: flex-end; overflow: hidden; }
    .tab { height: 19px; padding: 0 0 0 3px; border: 1px solid #dcdcdc; border-bottom: 0; width: 44px; overflow: hidden; box-sizing: border-box; }
    .cur { background: #fbfbfb; width: 87px; height: 21px; padding: 0 7px 0 6px; flex: none; }
    .nudge { width: 15px; height: 15px; border: 1px solid #a6a6a6; align-self: center; display: grid; place-items: center; box-sizing: border-box; flex: none; }
    .frame { display: flex; flex-direction: column; margin: 0 2px; padding: 4px 3px 4px 4px; background: #f6f6f6; border: 1px solid #dcdcdc; border-top: 0; height: 270px; flex: none; }
    .bar { display: flex; height: 24px; border-bottom: 1px solid #a6a6a6; flex: none; margin-bottom: 2px; box-sizing: border-box; border-right: 1px solid #a6a6a6; overflow: hidden; }
    .cmd { border: 1px solid #a0a0a0; padding: 0 4px 0 3px; height: 23px; box-sizing: border-box; background: #f3f3f3; }
    .drop { width: 12px; padding: 0 2px; }
    .push { margin-left: auto; width: 11px; padding: 0 1px 6px; border-bottom: 0; }
    .grid { display: flex; flex-direction: column; flex: 1; min-height: 0; background: #fff; border: 2px solid #a0a0a0; border-width: 1px 2px 2px 1px; overflow: hidden; }
    .view { flex: 1; min-height: 0; overflow: hidden; }
    table { border-collapse: separate; border-spacing: 0; table-layout: fixed; width: 172px; }
    .no { width: 21px; }
    th, td { padding: 0; font-weight: 400; box-sizing: border-box; white-space: nowrap; border: 0 solid #c4c4c4; border-width: 0 1px 1px 0; overflow: hidden; }
    thead th { height: 26px; background: linear-gradient(#fbdca4, #f2bd5f); color: #7b0a6a; }
    thead .no, tbody th { background: #f5f5f5; }
    tbody th, tbody td { height: 19px; line-height: 13px; text-align: center; }
    tbody td { text-align: left; padding-left: 20px; white-space: pre; }
    tbody .hot { background: #fbd08a; color: #7b0a6a; }
    tbody .green { background: #088020; border: 3px solid #7e8080; border-right: 0; padding-left: 17px; }
    .scroll { display: flex; align-items: center; height: 16px; background: #f0f0f0; margin: 0 1px 1px; padding: 0 3px; flex: none; }
    .knob { width: 17px; height: 16px; background: #cdcdcd; margin: 0 auto 0 3px; }
    .scroll svg { display: block; flex: none; }
    .second { margin-top: 6px; }
    .layers { flex: 1; border: 1px solid #828790; border-bottom: 0; margin-top: 1px; background: #fff; padding-top: 1px; }
    .layer { display: flex; align-items: center; height: 14px; line-height: 14px; white-space: nowrap; padding-left: 9px; }
    .layer svg { display: block; }
    .stub { width: 3px; border-top: 1px dotted #808080; margin: 0 2px 0 2px; }
    .elbow { width: 10px; height: 7px; border: 1px dotted #808080; border-width: 0 0 1px 1px; align-self: flex-start; margin: 0 1px 0 4px; }
    label { padding-left: 3px; }
    input { appearance: none; width: 13px; height: 12px; border: 1px solid #333; margin: 0; background: #fff; display: grid; place-items: center; flex: none; box-sizing: border-box; }
    input:checked::after { content: ""; width: 8px; height: 4px; border: solid #333; border-width: 0 0 1px 1px; transform: rotate(-45deg); margin-top: -3px; box-sizing: border-box; }
  `];
  render() {
    return html`
      <panel-title label="图纸管理" active></panel-title>
      <div class="tabs">
        <button class="tab cur">图纸文件列表</button><button class="tab">图纸楼层</button>
        <button class="nudge" aria-label="上一个"><svg viewBox="0 0 3 6" width="3" height="6"><path d="M3 0v6L0 3z"/></svg></button>
        <button class="nudge" aria-label="下一个"><svg viewBox="0 0 3 6" width="3" height="6"><path d="M0 0v6l3-3z"/></svg></button>
      </div>
      <div class="frame">
        <div class="bar">
          <button class="cmd">添加图纸</button><button class="cmd drop" aria-label="添加方式">${caret()}</button>
          <button class="cmd">整理图纸</button><button class="cmd push" aria-label="更多">${more}</button>
        </div>
        <div class="grid">
          <div class="view"><table>
            <thead><tr><th class="no"></th><th>图纸名称</th></tr></thead>
            <tbody>
              <tr><th>${mono("1")}</th><td>${mono("02子项地下车库")}   ${mono("11-")}</td></tr>
              <tr><th class="hot">${mono("2")}</th><td class="green">${mono("基础平面图.dwg(当前")}</td></tr>
            </tbody>
          </table></div>
          <div class="scroll">${chevron(LEFT)}<span class="knob"></span>${chevron(RIGHT)}</div>
        </div>
      </div>
      <panel-title class="second" label="CAD图层显示"></panel-title>
      <div class="layers">
        <div class="layer">${chevron(RIGHT, "#a6a6a6")}<span class="stub"></span><input type="checkbox" id="got"><label for="got">${mono("已提取的CAD图层")}</label></div>
        <div class="layer"><span class="elbow"></span><input type="checkbox" id="raw" checked><label for="raw">${mono("CAD原始图层")}</label></div>
      </div>`;
  }
}

@customElement("app-root")
class AppRoot extends LitElement {
  static styles = [iconStyles, css`
    :host {
      display: flex; flex-direction: column; height: 100vh; overflow: hidden; background: #f0f0f0; color: #000;
      font-family: "Noto Sans", "Noto Sans CJK SC", sans-serif; font-size: 12px; line-height: 16px; cursor: default;
    }
    .title { display: flex; align-items: center; gap: 5px; height: 22px; padding-left: 1px; background: #fff; color: #999; flex: none; white-space: nowrap; }
    .title .lat { font-family: "Open Sans", sans-serif; font-size: 13px; }
    .menus { display: flex; align-items: center; height: 31px; flex: none; overflow: hidden; padding-left: 6px; }
    .menu { margin-right: 11px; flex: none; }
    .entry { display: flex; align-items: center; gap: 4px; margin-right: 7px; flex: none; }
    .menus .caret { margin-right: 7px; }
    .notice { color: #1a6c72; background: linear-gradient(#fbfbfb, #f0f0f0); border-radius: 3px; flex: 0 0 188px; text-align: center; height: 27px; line-height: 27px; margin-right: 2px; white-space: nowrap; }
    .login { display: flex; align-items: center; gap: 4px; height: 27px; padding-left: 4px; background: linear-gradient(#fbfbfb, #f0f0f0); flex: none; }
    .line { display: flex; gap: 2px; flex: none; overflow: hidden; }
    .upper { height: 30px; }
    .file { width: 146px; }
    .main { width: 596px; }
    .body { display: flex; flex: 1; min-height: 0; }
    module-nav { margin-right: 4px; }
    drawing-panel { margin-right: 3px; }
    .work { display: flex; flex-direction: column; flex: 1; min-width: 0; }
    .bars { display: grid; grid-template-rows: 27px 28px 28px 26px; flex: none; overflow: hidden; }
    .bars .line { padding-left: 1px; align-items: center; gap: 2px; }
    .bars .wide { gap: 4px; }
    .canvas { position: relative; flex: 1; background: #000; min-height: 0; overflow: hidden; }
    .ghost { position: absolute; left: 152px; top: 154px; width: 388px; height: 74px; background: #f0f0f0; }
    .dialog { position: absolute; left: 162px; top: 103px; width: 362px; display: flex; flex-direction: column; box-sizing: border-box; border: 1px solid #9b9b9b; border-top-color: #333; background: #fff; box-shadow: 0 3px 8px rgba(0, 0, 0, .35); }
    .cap { height: 24px; line-height: 24px; padding-left: 3px; color: #999; margin: 0; font-size: 12px; font-weight: 400; }
    .msg { display: flex; gap: 11px; padding: 12px 11px 10px; height: 31px; }
    .msg p { margin: 5px 0 0; }
    .foot { display: flex; justify-content: flex-end; padding: 9px 11px 10px; background: #f0f0f0; border-top: 1px solid #dfdfdf; }
    .ok { width: 66px; height: 23px; border: 2px solid #0078d7; background: #e1e1e1; text-align: center; line-height: 16px; }
    .axes { position: absolute; left: 50px; bottom: 20px; }
  `];
  render() {
    return html`
      <header class="title">${icon("app")}<span>${mono("广联达BIM钢筋算量软件 GGJ2013 - [C:\\Users\\Administrator\\Desktop\\地下车库.GGJ12]")}</span></header>
      <nav class="menus">
        ${MENUS.map((m) => html`<button class="menu">${m}</button>`)}
        <button class="entry">${icon("change")}<span>新建变更</span></button>${caret()}
        <button class="entry">${icon("service")}<span>联系客服</span></button>
        <span class="notice">CAD图纸导入软件，软?.</span>
        <button class="login">${icon("user")}<span>登录</span></button>
      </nav>
      <div class="line upper">
        <tool-strip class="file" .items=${ROW_FILE}></tool-strip>
        <tool-strip class="main" .items=${ROW_MAIN}></tool-strip>
        <tool-strip .items=${ROW_VIEW}></tool-strip>
      </div>
      <div class="body">
        <module-nav></module-nav>
        <drawing-panel></drawing-panel>
        <main class="work">
          <div class="bars">
            <div class="line"><tool-strip .items=${ROW_EDIT}></tool-strip></div>
            <div class="line"><tool-strip .items=${ROW_PART}></tool-strip><tool-strip .items=${ROW_AXIS}></tool-strip></div>
            <div class="line wide"><tool-strip .items=${ROW_SELECT}></tool-strip><tool-strip .items=${ROW_CAD}></tool-strip></div>
            <div class="line"><tool-strip .items=${ROW_SYMBOL}></tool-strip><tool-strip .items=${ROW_LAYER}></tool-strip></div>
          </div>
          <div class="canvas">
            <svg class="axes" viewBox="0 0 60 62" width="60" height="62" aria-hidden="true">
              <path d="M3 52V14H1V11h1V8h1V5h1V3h2v2h1v3h1v3h1v3H7v38z" fill="#0f0"/>
              <path d="M5 50h37v-2h3v1h3v1h4v1h2v2h-2v1h-4v1h-3v1h-3v-2H5z" fill="#f00"/>
              <path d="M14 6l5 5 5-5M19 11v5" fill="none" stroke="#0f0" stroke-width="1.200"/>
              <path d="M42 31l9 9M51 31l-9 9" fill="none" stroke="#f00" stroke-width="1.600"/>
            </svg>
            <div class="ghost"></div>
            <section class="dialog" role="dialog" aria-labelledby="cap">
              <h2 class="cap" id="cap">提示</h2>
              <div class="msg">
                <svg viewBox="0 0 30 30" width="30" height="30" aria-hidden="true"><circle cx="15" cy="15" r="14.500" fill="#0078d7" stroke="#0a5a9c"/><path d="M15 11v13M15 6v2.500" stroke="#fff" stroke-width="2"/></svg>
                <p>CAD图元不能被正确识别，请处理图纸后再导入。</p>
              </div>
              <div class="foot"><button class="ok">确定</button></div>
            </section>
          </div>
        </main>
      </div>`;
  }
}
